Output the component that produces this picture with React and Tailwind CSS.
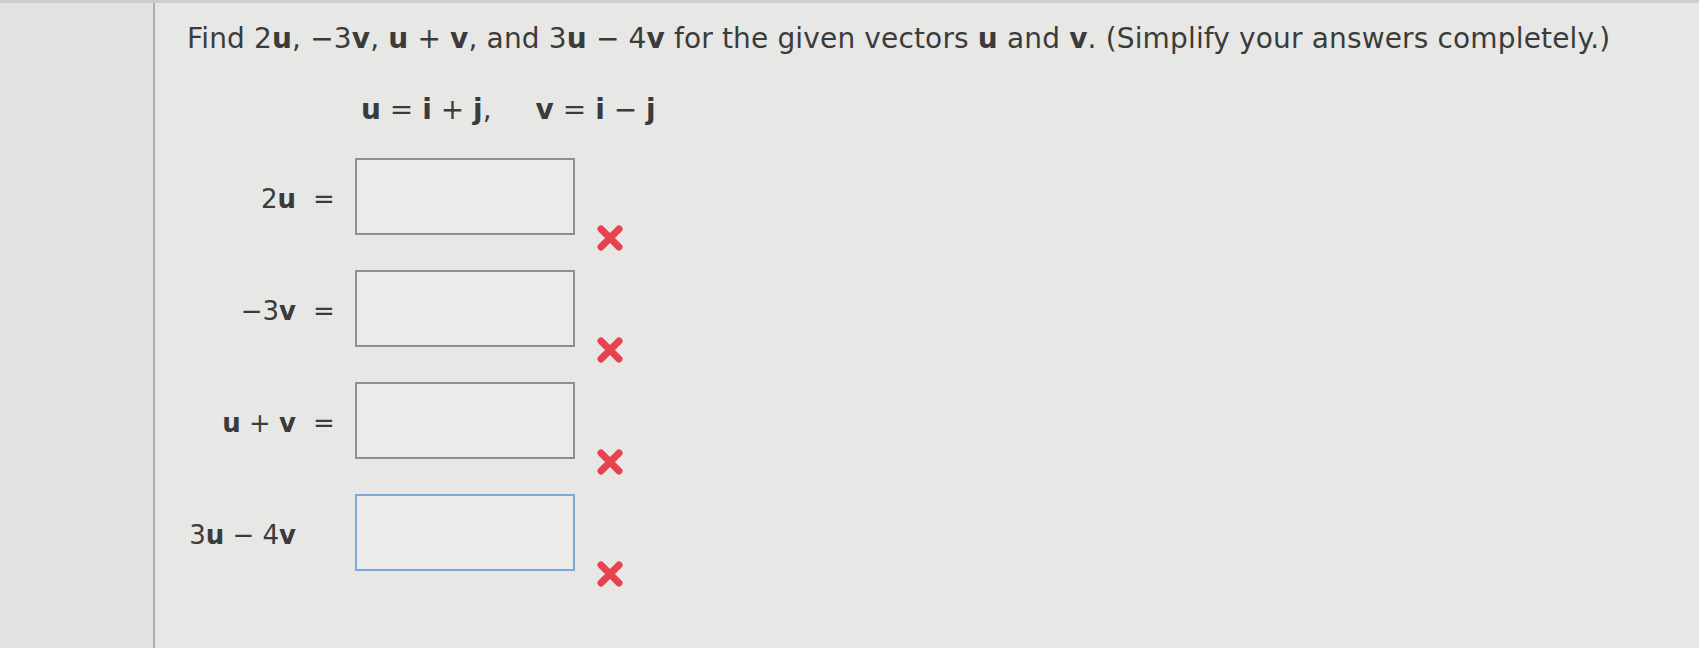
import React from 'react'

const font = { fontFamily: '"DejaVu Sans", Verdana, sans-serif' }

function XMark() {
  return (
    <svg width="28" height="28" viewBox="0 0 28 28" className="block">
      <path d="M5 5 L23 23 M23 5 L5 23" stroke="#e8414f" strokeWidth="7" strokeLinecap="round" fill="none" />
    </svg>
  )
}

function Row({ label, eq = true, active = false }) {
  return (
    <div className="flex items-center">
      <div className="w-[109px] text-right whitespace-nowrap mt-[5px]">{label}</div>
      <div className="w-[59px] mt-[5px]">
        {eq && <span className="ml-[17px]">=</span>}
      </div>
      <div
        className={`w-[220px] h-[77px] bg-[#ebebe9] border-2 ${
          active ? 'border-[#7ea7d3]' : 'border-[#8f8f8f]'
        }`}
      ></div>
      <div className="self-end mb-[-17px] ml-[21px]">
        <XMark />
      </div>
    </div>
  )
}

export default function App() {
  return (
    <div className="w-[1699px] h-[648px] bg-[#e4e4e2] flex flex-col overflow-hidden" style={font}>
      <div className="h-[3px] bg-[#cdcdcb]"></div>
      <div className="flex flex-1">
        <div className="w-[155px] bg-[#e3e3e1] border-r-2 border-[#b1aeb3]"></div>
        <div className="flex-1 bg-[#e7e7e5] pl-[32px] pt-[20px] text-[26px] leading-[31px] text-[#3b3b3b]">
          <p className="whitespace-nowrap text-[28px] tracking-[0.15px]">
            Find 2<b>u</b>, −3<b>v</b>, <b>u</b> + <b>v</b>, and 3<b>u</b> − 4<b>v</b> for the given vectors{' '}
            <b>u</b> and <b>v</b>. (Simplify your answers completely.)
          </p>

          <p className="mt-[40px] ml-[174px] whitespace-nowrap text-[28px]">
            <b>u</b> = <b>i</b> + <b>j</b>,<span className="inline-block w-[44px]"></span>
            <b>v</b> = <b>i</b> − <b>j</b>
          </p>

          <div className="mt-[33px] flex flex-col gap-[35px]">
            <Row label={<>2<b>u</b></>} />
            <Row label={<>−3<b>v</b></>} />
            <Row label={<><b>u</b> + <b>v</b></>} />
            <Row label={<>3<b>u</b> − 4<b>v</b></>} eq={false} active />
          </div>
        </div>
      </div>
    </div>
  )
}
